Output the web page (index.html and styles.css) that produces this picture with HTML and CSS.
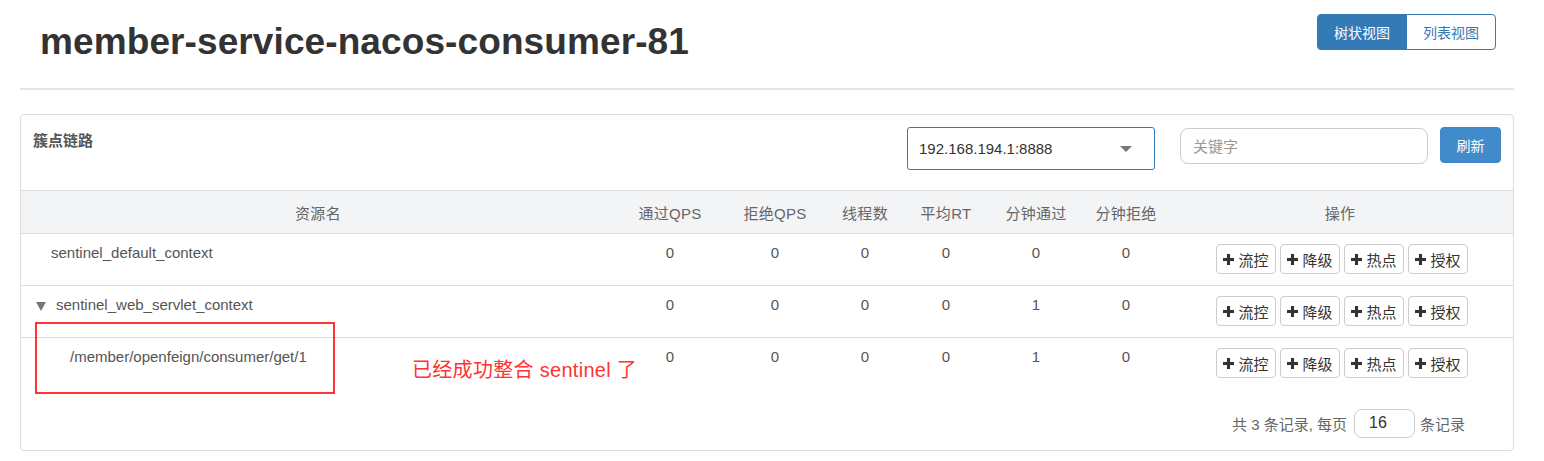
FILE: index.html
```html
<!DOCTYPE html>
<html lang="zh">
<head>
<meta charset="utf-8">
<title>member-service-nacos-consumer-81</title>
<link rel="stylesheet" href="styles.css">
</head>
<body>
<div class="page">
  <header class="page-head">
    <h1 class="app-title">member-service-nacos-consumer-81</h1>
    <div class="view-toggle">
      <button class="vt-btn active">树状视图</button>
      <button class="vt-btn">列表视图</button>
    </div>
  </header>

  <section class="panel">
    <div class="panel-heading">
      <div class="panel-title">簇点链路</div>
      <div class="machine-select">
        <span class="ms-text">192.168.194.1:8888</span>
        <span class="ms-caret"></span>
      </div>
      <input class="search" type="text" placeholder="关键字">
      <button class="refresh">刷新</button>
    </div>

    <table class="res-table">
      <colgroup>
        <col class="c-name"><col class="c-qps"><col class="c-bqps"><col class="c-thr">
        <col class="c-rt"><col class="c-mp"><col class="c-mb"><col class="c-op">
      </colgroup>
      <thead>
        <tr>
          <th>资源名</th><th>通过QPS</th><th>拒绝QPS</th><th>线程数</th>
          <th>平均RT</th><th>分钟通过</th><th>分钟拒绝</th><th>操作</th>
        </tr>
      </thead>
      <tbody>
        <tr>
          <td class="name"><span class="indent-leaf"></span>sentinel_default_context</td>
          <td>0</td><td>0</td><td>0</td><td>0</td><td>0</td><td>0</td>
          <td class="ops">
            <div class="op-group">
              <button class="op"><svg class="plus" viewBox="0 0 10 10"><rect x="3.6" y="0" width="2.8" height="10"/><rect x="0" y="3.6" width="10" height="2.8"/></svg>流控</button>
              <button class="op"><svg class="plus" viewBox="0 0 10 10"><rect x="3.6" y="0" width="2.8" height="10"/><rect x="0" y="3.6" width="10" height="2.8"/></svg>降级</button>
              <button class="op"><svg class="plus" viewBox="0 0 10 10"><rect x="3.6" y="0" width="2.8" height="10"/><rect x="0" y="3.6" width="10" height="2.8"/></svg>热点</button>
              <button class="op"><svg class="plus" viewBox="0 0 10 10"><rect x="3.6" y="0" width="2.8" height="10"/><rect x="0" y="3.6" width="10" height="2.8"/></svg>授权</button>
            </div>
          </td>
        </tr>
        <tr>
          <td class="name"><span class="expander"></span>sentinel_web_servlet_context</td>
          <td>0</td><td>0</td><td>0</td><td>0</td><td>1</td><td>0</td>
          <td class="ops">
            <div class="op-group">
              <button class="op"><svg class="plus" viewBox="0 0 10 10"><rect x="3.6" y="0" width="2.8" height="10"/><rect x="0" y="3.6" width="10" height="2.8"/></svg>流控</button>
              <button class="op"><svg class="plus" viewBox="0 0 10 10"><rect x="3.6" y="0" width="2.8" height="10"/><rect x="0" y="3.6" width="10" height="2.8"/></svg>降级</button>
              <button class="op"><svg class="plus" viewBox="0 0 10 10"><rect x="3.6" y="0" width="2.8" height="10"/><rect x="0" y="3.6" width="10" height="2.8"/></svg>热点</button>
              <button class="op"><svg class="plus" viewBox="0 0 10 10"><rect x="3.6" y="0" width="2.8" height="10"/><rect x="0" y="3.6" width="10" height="2.8"/></svg>授权</button>
            </div>
          </td>
        </tr>
        <tr class="last">
          <td class="name"><span class="indent-child"></span>/member/openfeign/consumer/get/1</td>
          <td>0</td><td>0</td><td>0</td><td>0</td><td>1</td><td>0</td>
          <td class="ops">
            <div class="op-group">
              <button class="op"><svg class="plus" viewBox="0 0 10 10"><rect x="3.6" y="0" width="2.8" height="10"/><rect x="0" y="3.6" width="10" height="2.8"/></svg>流控</button>
              <button class="op"><svg class="plus" viewBox="0 0 10 10"><rect x="3.6" y="0" width="2.8" height="10"/><rect x="0" y="3.6" width="10" height="2.8"/></svg>降级</button>
              <button class="op"><svg class="plus" viewBox="0 0 10 10"><rect x="3.6" y="0" width="2.8" height="10"/><rect x="0" y="3.6" width="10" height="2.8"/></svg>热点</button>
              <button class="op"><svg class="plus" viewBox="0 0 10 10"><rect x="3.6" y="0" width="2.8" height="10"/><rect x="0" y="3.6" width="10" height="2.8"/></svg>授权</button>
            </div>
          </td>
        </tr>
      </tbody>
    </table>

    <div class="pager">
      <span class="pg-text">共 3 条记录, 每页</span>
      <input class="pg-size" type="text" value="16">
      <span class="pg-text">条记录</span>
    </div>

    <div class="note-box"></div>
    <div class="note-text">已经成功整合 sentinel 了</div>
  </section>
</div>
</body>
</html>
```

FILE: styles.css
```css
* { box-sizing: border-box; }

html, body {
  margin: 0;
  padding: 0;
  background: #fff;
}

body {
  font-family: "Liberation Sans", Arial, "Noto Sans CJK SC", sans-serif;
  font-size: 14px;
  color: #333;
}

.page {
  margin: 0 30px 0 20px;
}

.page-head {
  display: flex;
  justify-content: space-between;
  align-items: flex-start;
  height: 90px;
  padding: 14px 18px 0 20px;
  border-bottom: 2px solid #e5e5e5;
}

.app-title {
  margin: 8px 0 0 0;
  font-size: 37px;
  line-height: 40px;
  font-weight: bold;
  color: #333;
  letter-spacing: 0.1px;
}

.view-toggle {
  display: flex;
  height: 36px;
}

.vt-btn {
  width: 90px;
  height: 36px;
  padding: 0;
  font-family: inherit;
  font-size: 14px;
  color: #337ab7;
  background: #fff;
  border: 1px solid #337ab7;
  border-radius: 0 4px 4px 0;
  margin-left: -1px;
}

.vt-btn.active {
  color: #fff;
  background: #337ab7;
  border-radius: 4px 0 0 4px;
  margin-left: 0;
}

.panel {
  position: relative;
  margin-top: 24px;
  border: 1px solid #ddd;
  border-radius: 4px;
}

.panel-heading {
  display: flex;
  align-items: flex-start;
  height: 75px;
  padding: 12px 12px 0 12px;
}

.panel-title {
  margin-top: 4px;
  line-height: 20px;
  font-size: 15px;
  font-weight: bold;
  color: #555;
}

.machine-select {
  margin-left: auto;
  width: 248px;
  height: 43px;
  display: flex;
  align-items: center;
  justify-content: space-between;
  padding: 0 22px 0 11px;
  border: 1px solid #337ab7;
  border-radius: 3px;
}

.ms-text {
  font-size: 15px;
  color: #333;
}

.ms-caret {
  width: 0;
  height: 0;
  border-left: 6px solid transparent;
  border-right: 6px solid transparent;
  border-top: 6px solid #777;
}

.search {
  margin: 1px 0 0 25px;
  width: 248px;
  height: 36px;
  padding: 0 12px;
  border: 1px solid #ccc;
  border-radius: 8px;
  font-family: inherit;
  font-size: 15px;
  color: #333;
  outline: none;
}

.search::placeholder {
  color: #999;
}

.refresh {
  margin-left: 12px;
  width: 61px;
  height: 36px;
  padding: 0;
  border: 1px solid #3f87c7;
  border-radius: 4px;
  background: #428bca;
  color: #fff;
  font-family: inherit;
  font-size: 14px;
}

.res-table {
  width: 100%;
  border-collapse: collapse;
  table-layout: fixed;
}

.c-name { width: 594px; }
.c-qps { width: 110px; }
.c-bqps { width: 100px; }
.c-thr { width: 80px; }
.c-rt { width: 82px; }
.c-mp { width: 98px; }
.c-mb { width: 82px; }

.res-table th {
  height: 43px;
  padding: 0;
  font-size: 15px;
  font-weight: normal;
  color: #666;
  background: #f3f4f6;
  border-top: 1px solid #ddd;
  border-bottom: 1px solid #ddd;
  text-align: center;
  letter-spacing: 0.3px;
}

.res-table td {
  padding: 9px 0 0 0;
  height: 52px;
  line-height: 20px;
  vertical-align: top;
  text-align: center;
  color: #555;
  font-size: 15px;
  border-bottom: 1px solid #ddd;
}

.res-table tr.last td {
  border-bottom: none;
}

.res-table td.name {
  text-align: left;
  padding-left: 15px;
}

.indent-leaf {
  display: inline-block;
  width: 15px;
}

.indent-child {
  display: inline-block;
  width: 34px;
}

.expander {
  display: inline-block;
  width: 0;
  height: 0;
  margin-right: 10px;
  vertical-align: -1px;
  border-left: 5px solid transparent;
  border-right: 5px solid transparent;
  border-top: 9px solid #777;
}

.res-table td.ops {
  padding-top: 10px;
}

.op-group {
  display: inline-flex;
  gap: 4px;
  margin-left: 4px;
}

.op {
  display: inline-flex;
  align-items: center;
  justify-content: center;
  gap: 4px;
  width: 60px;
  height: 30px;
  padding: 0;
  border: 1px solid #ccc;
  border-radius: 4px;
  background: #fff;
  color: #333;
  font-family: inherit;
  font-size: 15px;
}

.plus {
  width: 11px;
  height: 11px;
  fill: #333;
}

.pager {
  display: flex;
  justify-content: flex-end;
  align-items: center;
  padding: 19px 48px 12px 0;
}

.pg-text {
  font-size: 15px;
  color: #666;
}

.pg-size {
  width: 61px;
  height: 29px;
  margin: 0 5px 0 7px;
  padding: 0 14px;
  border: 1px solid #ccc;
  border-radius: 8px;
  font-family: inherit;
  font-size: 16px;
  color: #333;
  outline: none;
}

.note-box {
  position: absolute;
  left: 14px;
  top: 207px;
  width: 300px;
  height: 72px;
  border: 2px solid #f33;
}

.note-text {
  position: absolute;
  left: 391px;
  top: 243px;
  line-height: 24px;
  font-size: 20px;
  letter-spacing: 0.3px;
  color: #f33;
}
```
